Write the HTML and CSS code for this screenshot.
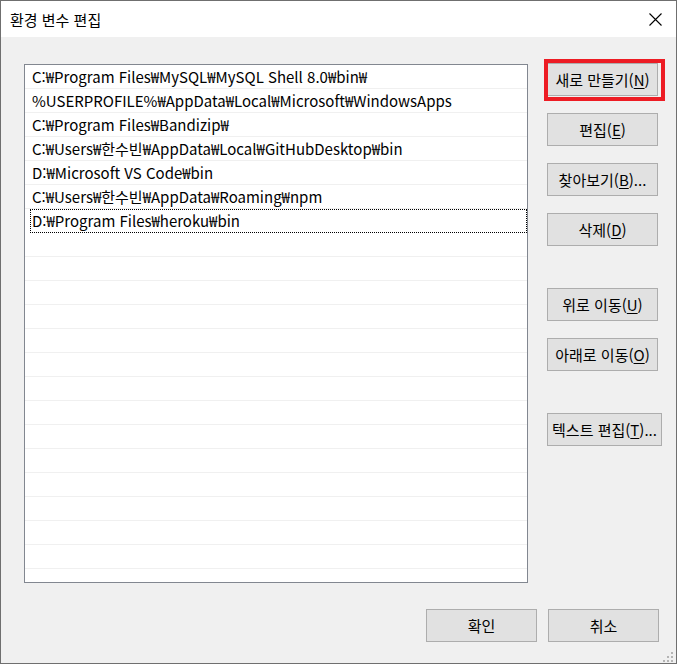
FILE: index.html
```html
<!DOCTYPE html>
<html lang="ko">
<head>
<meta charset="utf-8">
<title>환경 변수 편집</title>
<link rel="stylesheet" href="styles.css">
</head>
<body>
<div class="window">
  <div class="titlebar">
    <span class="title">환경 변수 편집</span>
    <svg class="close" width="13" height="13" viewBox="0 0 13 13"><path d="M0.5 0.5 L12.5 12.5 M12.5 0.5 L0.5 12.5" stroke="#000" stroke-width="1.1" fill="none"/></svg>
  </div>
  <div class="content">
    <div class="main">
      <div class="list">
        <div class="row">C:₩Program Files₩MySQL₩MySQL Shell 8.0₩bin₩</div>
        <div class="row">%USERPROFILE%₩AppData₩Local₩Microsoft₩WindowsApps</div>
        <div class="row">C:₩Program Files₩Bandizip₩</div>
        <div class="row">C:₩Users₩한수빈₩AppData₩Local₩GitHubDesktop₩bin</div>
        <div class="row">D:₩Microsoft VS Code₩bin</div>
        <div class="row">C:₩Users₩한수빈₩AppData₩Roaming₩npm</div>
        <div class="row focus">D:₩Program Files₩heroku₩bin</div>
        <div class="row"></div><div class="row"></div><div class="row"></div>
        <div class="row"></div><div class="row"></div><div class="row"></div>
        <div class="row"></div><div class="row"></div><div class="row"></div>
        <div class="row"></div><div class="row"></div><div class="row"></div>
        <div class="row"></div><div class="row"></div><div class="row"></div>
      </div>
      <div class="side">
        <div class="btn-wrap">
          <button class="btn">새로 만들기(<u>N</u>)</button>
          <span class="highlight"></span>
        </div>
        <button class="btn">편집(<u>E</u>)</button>
        <button class="btn">찾아보기(<u>B</u>)...</button>
        <button class="btn">삭제(<u>D</u>)</button>
        <button class="btn group">위로 이동(<u>U</u>)</button>
        <button class="btn">아래로 이동(<u>O</u>)</button>
        <button class="btn group wide">텍스트 편집(<u>T</u>)...</button>
      </div>
    </div>
    <div class="footer">
      <button class="btn">확인</button>
      <button class="btn">취소</button>
    </div>
  </div>
  <div class="grip">
    <span class="dot d1"></span><span class="dot d2"></span><span class="dot d3"></span>
    <span class="dot d4"></span><span class="dot d5"></span><span class="dot d6"></span>
  </div>
</div>
</body>
</html>
```
FILE: styles.css
```css
* { box-sizing: border-box; }
html, body { margin: 0; padding: 0; background: #f0f0f0; }
body {
  font-family: "Noto Sans CJK KR", "Noto Sans", sans-serif;
  font-size: 15px;
  color: #000;
}
.window {
  position: relative;
  width: 677px;
  height: 664px;
  border: 1px solid #6f6f6f;
  background: #f0f0f0;
  display: flex;
  flex-direction: column;
}
.titlebar {
  height: 36px;
  background: #fff;
  display: flex;
  align-items: center;
  justify-content: space-between;
  padding: 2px 14px 0 9px;
  flex: none;
}
.title { font-size: 15px; line-height: 20px; }
.close { display: block; margin-top: -2px; }
.content {
  flex: 1;
  display: flex;
  flex-direction: column;
  padding: 26px 0 0 23px;
}
.main {
  display: flex;
  align-items: flex-start;
  gap: 19px;
}
.list {
  margin-top: 1px;
  width: 504px;
  height: 519px;
  border: 1px solid #828790;
  background: #fff;
  overflow: hidden;
}
.row {
  height: 24px;
  line-height: 23px;
  border-bottom: 1px solid #f0f0f0;
  padding-left: 7px;
  white-space: nowrap;
}
.row.focus {
  border: 1px dotted #000;
  margin-left: 5px;
  padding-left: 1px;
  line-height: 22px;
}
.side {
  display: flex;
  flex-direction: column;
  align-items: flex-start;
  gap: 17px;
}
.btn {
  width: 111px;
  height: 33px;
  background: #e1e1e1;
  border: 1px solid #adadad;
  font-family: inherit;
  font-size: 15px;
  color: #000;
  padding: 0;
  white-space: nowrap;
  line-height: 20px;
}
.btn u { text-decoration: underline; text-underline-offset: 2px; }
.btn.group { margin-top: 25px; }
.btn.wide { width: 115px; }
.btn-wrap { position: relative; }
.btn-wrap .btn { display: block; }
.highlight {
  position: absolute;
  left: -3px;
  top: -4px;
  width: 121px;
  height: 42px;
  border: 4px solid #ed1c24;
  pointer-events: none;
}
.footer {
  display: flex;
  justify-content: flex-end;
  gap: 11px;
  margin-top: 26px;
  padding-right: 17px;
}
.grip {
  position: absolute;
  right: 3px;
  bottom: 1px;
  width: 10px;
  height: 10px;
}
.dot { position: absolute; width: 2px; height: 2px; background: #b4b4b4; }
.d1 { left: 8px; top: 0; }
.d2 { left: 4px; top: 4px; }
.d3 { left: 8px; top: 4px; }
.d4 { left: 0; top: 8px; }
.d5 { left: 4px; top: 8px; }
.d6 { left: 8px; top: 8px; }
```
